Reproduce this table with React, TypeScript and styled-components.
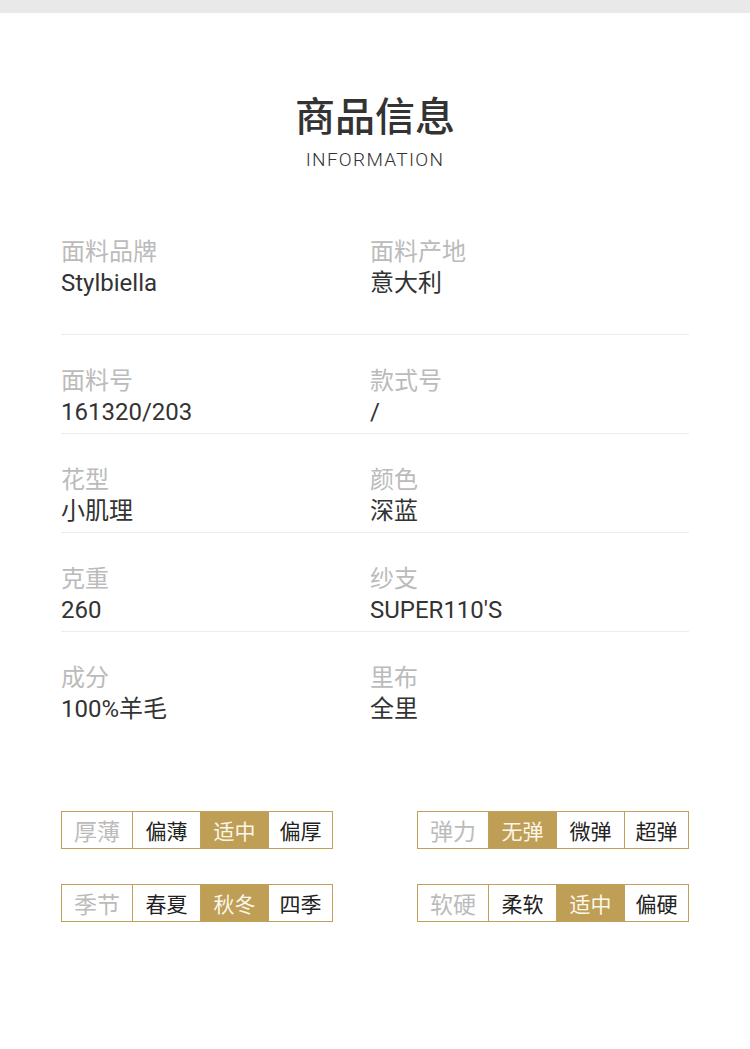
import styled, {createGlobalStyle} from "styled-components";

const GlobalStyle = createGlobalStyle`
  body {
    margin: 0;
    background: #ffffff;
    font-family: Roboto, "Noto Sans CJK SC", sans-serif;
  }
`;

const Page = styled.div`
  width: 750px;
  min-height: 1049px;
  background: #fff;
`;

const TopBar = styled.div`
  height: 13px;
  background: #e9e9e9;
`;

const Header = styled.header`
  padding-top: 77px;
  display: flex;
  flex-direction: column;
  align-items: center;
`;

const Title = styled.h1`
  margin: 0;
  font-family: "Noto Sans CJK SC", sans-serif;
  font-size: 40px;
  font-weight: 500;
  line-height: 48px;
  color: #333;
`;

const SubTitle = styled.div`
  margin-top: 10px;
  font-family: Roboto, "Noto Sans", sans-serif;
  font-weight: 300;
  font-size: 19px;
  letter-spacing: 1.3px;
  line-height: 24px;
  color: #333;
`;

const InfoList = styled.section`
  margin: 63px 61px 0 61px;
`;

const InfoRow = styled.div<{ $last?: boolean; $first?: boolean }>`
  display: grid;
  grid-template-columns: 309px 1fr;
  padding: ${(p) => (p.$first ? "0 0 36px" : "29px 0 6px")};
  border-bottom: ${(p) => (p.$last ? "none" : "1px solid #ececec")};
`;

const Field = styled.div`
  display: flex;
  flex-direction: column;
`;

const Label = styled.div`
  font-family: "Noto Sans CJK SC", sans-serif;
  font-size: 24px;
  line-height: 30px;
  color: #bbbbbb;
`;

const Value = styled.div`
  margin-top: 3px;
  font-family: Roboto, "Noto Sans CJK SC", sans-serif;
  font-size: 24px;
  line-height: 30px;
  color: #333;
`;

const TagArea = styled.section`
  margin: 81px 61px 0 61px;
  display: grid;
  grid-template-columns: 272px 272px;
  justify-content: space-between;
  row-gap: 35px;
`;

const TagGroup = styled.div`
  display: flex;
  border: 1px solid #c0a05a;
  height: 36px;
`;

const TagCell = styled.div<{ $kind: "title" | "normal" | "active" }>`
  width: ${(p) => (p.$kind === "title" ? "70px" : "67px")};
  display: flex;
  align-items: center;
  justify-content: center;
  font-family: "Noto Sans CJK SC", sans-serif;
  font-size: ${(p) => (p.$kind === "title" ? "23px" : "21px")};
  border-right: 1px solid ${(p) => (p.$kind === "active" ? "#bf9e55" : "#c0a05a")};
  background: ${(p) => (p.$kind === "active" ? "#bf9e55" : "#fff")};
  color: ${(p) =>
    p.$kind === "title" ? "#bbbbbb" : p.$kind === "active" ? "#fbf6ea" : "#222"};

  &:last-child {
    border-right: none;
    flex: 1;
  }
`;

const rows: [string, string, string, string][] = [
  ["面料品牌", "Stylbiella", "面料产地", "意大利"],
  ["面料号", "161320/203", "款式号", "/"],
  ["花型", "小肌理", "颜色", "深蓝"],
  ["克重", "260", "纱支", "SUPER110'S"],
  ["成分", "100%羊毛", "里布", "全里"],
];

const tags: { title: string; options: string[]; active: number }[] = [
  {title: "厚薄", options: ["偏薄", "适中", "偏厚"], active: 1},
  {title: "弹力", options: ["无弹", "微弹", "超弹"], active: 0},
  {title: "季节", options: ["春夏", "秋冬", "四季"], active: 1},
  {title: "软硬", options: ["柔软", "适中", "偏硬"], active: 1},
];

const App = () => {
    return (
        <Page>
            <GlobalStyle/>
            <TopBar/>
            <Header>
                <Title>商品信息</Title>
                <SubTitle>INFORMATION</SubTitle>
            </Header>

            <InfoList>
                {rows.map((r, i) => (
                    <InfoRow key={r[0]} $first={i === 0} $last={i === rows.length - 1}>
                        <Field>
                            <Label>{r[0]}</Label>
                            <Value>{r[1]}</Value>
                        </Field>
                        <Field>
                            <Label>{r[2]}</Label>
                            <Value>{r[3]}</Value>
                        </Field>
                    </InfoRow>
                ))}
            </InfoList>

            {/* 属性标签 */}
            <TagArea>
                {tags.map((t) => (
                    <TagGroup key={t.title}>
                        <TagCell $kind="title">{t.title}</TagCell>
                        {t.options.map((o, j) => (
                            <TagCell key={o} $kind={j === t.active ? "active" : "normal"}>{o}</TagCell>
                        ))}
                    </TagGroup>
                ))}
            </TagArea>
        </Page>
    );
};

export default App;
